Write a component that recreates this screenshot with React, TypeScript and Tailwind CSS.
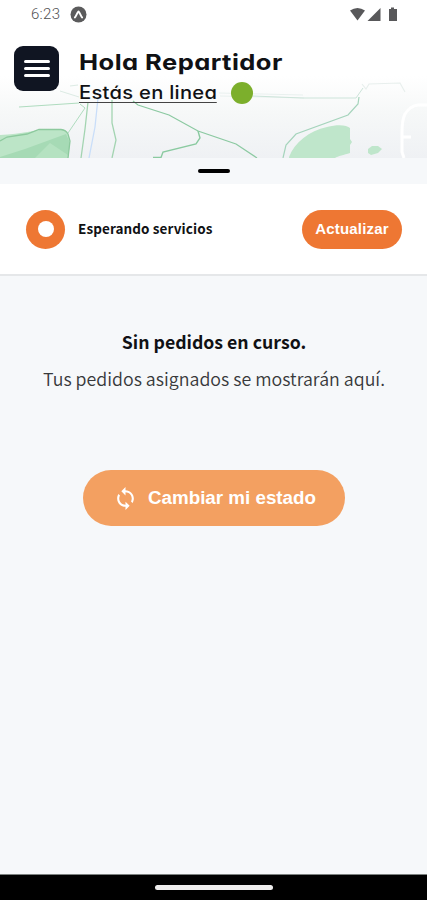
const noto = "font-['Noto_Sans_CJK_SC',sans-serif]";
const inter = "font-['Inter',sans-serif] [font-feature-settings:'cv11']";

function MapBackground() {
  return (
    <svg className="absolute inset-0 h-[158px] w-full" viewBox="0 0 427 158" fill="none">
      <defs>
        <linearGradient id="ground" x1="0" y1="76" x2="0" y2="158" gradientUnits="userSpaceOnUse">
          <stop offset="0" stopColor="#ffffff" />
          <stop offset="0.45" stopColor="#f6f8f8" />
          <stop offset="1" stopColor="#eff1f4" />
        </linearGradient>
      </defs>
      <rect y="76" width="427" height="82" fill="url(#ground)" />
      <path d="M0 135C22 134 38 129 52 129H62C67 131 70 137 70 143L68 158H0Z" fill="#bce5c7" />
      <path d="M0 157L25 149L66 134L70 143L68 158H0Z" fill="#a6dab5" />
      <path d="M35 158L50 143L68 155V158Z" fill="#b5e2c1" />
      <path d="M0 141L7 137L27 134L39 129.500H61Q66 130 68 134L70 141L68 158" stroke="#8cc99d" strokeWidth="1.3" />
      <path d="M68 133L85 108L80 104M19 107L79 103" stroke="#afdcbf" strokeWidth="1" />
      <path d="M60 91L79 97M70 86L78 85" stroke="#dcebe4" strokeWidth="1" />
      <path d="M88 102L85 129L81 158M112 100V123L116 140L112 158" stroke="#a3d4b1" strokeWidth="1.3" />
      <path d="M98 98L95 127L89 158" stroke="#c9def9" strokeWidth="1.3" />
      <path d="M133 101L138 105L169 115L198 131L236 144L257 158" stroke="#8bc9a1" strokeWidth="1.2" />
      <path d="M198 131L200 138L196 144L163 152L161 157.500H153" stroke="#8acaa0" strokeWidth="1.4" />
      <path d="M220 96L304 98M219 93L303 95" stroke="#e9f1ef" strokeWidth="1" />
      <path d="M253 96L303 98H356L363 88" stroke="#cde4da" strokeWidth="1" />
      <path d="M359 97L358 104L348 115L296 134L286 145L283 158" stroke="#a5d4bc" strokeWidth="1.2" />
      <path d="M362 84L366 89L369 84L400 83L405 92" stroke="#e8efed" strokeWidth="1.2" />
      <path d="M289 157C295 142 309 131 327 127C338 124 347 125 350 128V139L352 142L350 145V153C344 155 338 156 335 158H289Z" fill="#bfe6cb" />
      <path d="M368 153V149L372 146H378L382 149L378 153L371 155Z" fill="#bfe6cb" />
      <path d="M427 105H418Q410 106 405 114Q402 120 402 132V152L404 158M402 137H411" stroke="#ffffff" strokeWidth="3" />
    </svg>
  );
}

function StatusBar() {
  return (
    <div className="relative flex h-7 items-center pt-[1px] pr-[28px] pl-[31px]">
      <span className="w-[39px] font-['Roboto',sans-serif] text-[15px] font-light tracking-[0.3px] text-[#505052]">6:23</span>
      <svg className="size-[17px]" viewBox="0 0 17 17" fill="none">
        <circle cx="8.500" cy="8.500" r="8" fill="#5b5b5c" />
        <path d="M4.800 11.500C6 10.500 7 7 8.500 5.500C10 7 11 10.500 12.200 11.500" stroke="white" strokeWidth="1.800" strokeLinecap="round" strokeLinejoin="round" />
      </svg>
      <svg className="ml-auto h-[15px] w-[49px]" viewBox="0 0 49 15" fill="#58585a">
        <path d="M0 3.500Q7.500-1.500 15 3.500L7.500 13.500Z" />
        <path d="M30.500 1V14H17.500Z" />
        <path d="M39 2H41V.500H44V2H47V14H39Z" />
      </svg>
    </div>
  );
}

export default function App() {
  return (
    <main className="flex h-[900px] w-full flex-col overflow-hidden bg-[#f6f8fa] text-[#101114]">
      <header className="relative h-[158px] shrink-0 bg-white">
        <MapBackground />
        <StatusBar />
        <div className="relative flex pt-[18px] pl-[14px]">
          <button aria-label="Menu" className="flex size-[45px] flex-col items-center justify-center gap-[4px] rounded-[9px] bg-[#101522]">
            <span className="h-[3px] w-[26px] rounded-full bg-white" />
            <span className="h-[3px] w-[26px] rounded-full bg-white" />
            <span className="h-[3px] w-[26px] rounded-full bg-white" />
          </button>
          <div className={`${inter} ml-5 whitespace-nowrap`}>
            <h1 className="h-[33px] w-fit origin-left scale-x-[1.16] text-[22px] leading-[32px] font-bold tracking-[0.4px]">Hola Repartidor</h1>
            <div className="flex h-7 items-center">
              <span className="w-[152px]">
                <span className="inline-block origin-left scale-x-[1.12] border-b border-[#444] text-[18px] leading-[18px] font-medium tracking-[0.25px]">Estás en linea</span>
              </span>
              <span className="size-[22px] rounded-full bg-[#7caf2c]" />
            </div>
          </div>
        </div>
      </header>
      <div className="flex h-[26px] shrink-0 justify-center pt-[11px]">
        <span className="h-[4px] w-[32px] rounded-full bg-black" />
      </div>
      <section className="flex h-[92px] shrink-0 items-center border-b-2 border-[#e5e7e9] bg-white pr-[25px] pl-[26px]">
        <span className="flex size-[39px] items-center justify-center rounded-full bg-[#ee7733]">
          <span className="size-[16px] rounded-full bg-white" />
        </span>
        <span className={`${noto} ml-[13px] pb-px text-[13.500px] font-bold tracking-[0.1px] whitespace-nowrap`}>Esperando servicios</span>
        <button className="ml-auto h-[39px] w-[100px] rounded-full bg-[#ee7733] font-['Liberation_Sans',sans-serif] text-[15px] font-bold tracking-[0.2px] text-white">Actualizar</button>
      </section>
      <section className="flex flex-1 flex-col items-center pt-[49px]">
        <h2 className={`${noto} h-[36px] pl-px text-[17.700px] leading-[32px] font-bold whitespace-nowrap`}>Sin pedidos en curso.</h2>
        <p className={`${noto} pl-px text-[17.800px] leading-[34px] font-[350] whitespace-nowrap text-[#38393b]`}>Tus pedidos asignados se mostrarán aquí.</p>
        <button className="mt-[75px] flex h-[56px] w-[262px] items-center justify-center gap-[10px] rounded-full bg-[#f3a061] pl-[2px] font-['Liberation_Sans',sans-serif] text-[18.800px] font-bold whitespace-nowrap text-white">
          <svg className="size-[25px]" viewBox="0 0 24 24" fill="currentColor">
            <path d="M12 4V1L8 5l4 4V6c3.310 0 6 2.690 6 6 0 1.010-.25 1.970-.7 2.800l1.460 1.460C19.540 15.030 20 13.570 20 12c0-4.420-3.580-8-8-8zm0 14c-3.310 0-6-2.690-6-6 0-1.010.25-1.970.7-2.800L5.240 7.740C4.460 8.970 4 10.430 4 12c0 4.420 3.580 8 8 8v3l4-4-4-4v3z" />
          </svg>
          <span>Cambiar mi estado</span>
        </button>
      </section>
      <footer className="flex h-[26px] shrink-0 justify-center border-t border-[#7c817f] bg-black pt-[10px]">
        <span className="h-[5px] w-[118px] rounded-full bg-[#eeeded]" />
      </footer>
    </main>
  );
}
